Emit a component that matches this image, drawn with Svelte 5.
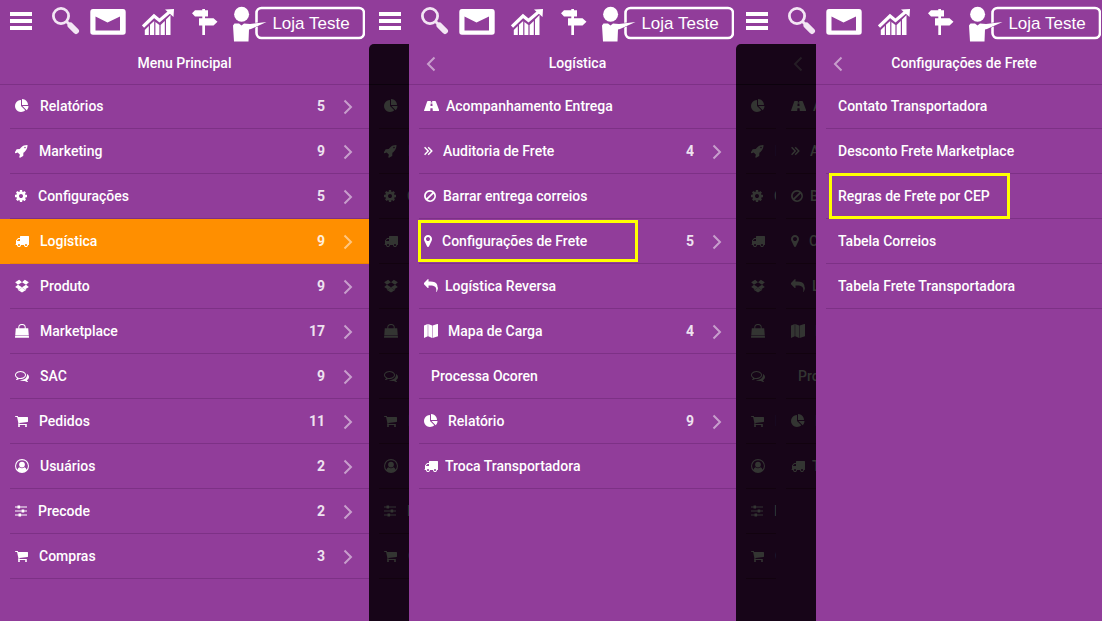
<script lang="ts">
  type Item = {
    label: string
    icon?: string
    count?: number
    active?: boolean
    tight?: boolean
    mark?: 'wide' | 'tall'
  }

  // each icon: left edge and width inside the 1792 grid, drawn width in px, path
  const icons: Record<string, { x: number; w: number; px: number; d: string }> = {
    pie: { x: 0, w: 1792, px: 14, d: 'M768 890l546 546q-106 108-247.5 168t-298.5 60q-209 0-385.5-103t-279.5-279.5-103-385.5 103-385.5 279.5-279.5 385.5-103v762zm187 6h773q0 157-60 298.5t-168 247.5zm709-128h-768v-768q209 0 385.5 103t279.5 279.5 103 385.5z' },
    rocket: { x: 64, w: 1664, px: 13, d: 'M1440 448q0-40-28-68t-68-28-68 28-28 68 28 68 68 28 68-28 28-68zm224-288q0 249-75.5 430.5t-253.5 360.5q-81 80-195 176l-20 379q-2 16-16 26l-384 224q-7 4-16 4-12 0-23-9l-64-64q-13-14-8-32l85-276-281-281-276 85q-3 1-9 1-14 0-23-9l-64-64q-17-19-5-39l224-384q10-14 26-16l379-20q96-114 176-195 188-187 358-258t431-71q14 0 24 9.5t10 22.5z' },
    cog: { x: 128, w: 1536, px: 12, d: 'M1152 896q0-106-75-181t-181-75-181 75-75 181 75 181 181 75 181-75 75-181zm512-109v222q0 12-8 23t-20 13l-185 28q-19 54-39 91 35 50 107 138 10 12 10 25t-9 23q-27 37-99 108t-94 71q-12 0-26-9l-138-108q-44 23-91 38-16 136-29 186-7 28-36 28h-222q-14 0-24.5-8.5t-11.5-21.5l-28-184q-49-16-90-37l-141 107q-10 9-25 9-14 0-25-11-126-114-165-168-7-10-7-23 0-12 8-23 15-21 51-66.5t54-70.5q-27-50-41-99l-183-27q-13-2-21-12.5t-8-23.5v-222q0-12 8-23t19-13l186-28q14-46 39-92-40-57-107-138-10-12-10-24 0-10 9-23 26-36 98.5-107.5t94.5-71.5q13 0 26 10l138 107q44-23 91-38 16-136 29-186 7-28 36-28h222q14 0 24.5 8.5t11.5 21.5l28 184q49 16 90 37l142-107q9-9 24-9 13 0 25 10 129 119 165 170 7 8 7 22 0 12-8 23-15 21-51 66.5t-54 70.5q26 50 41 98l183 28q13 2 21 12.5t8 23.5z' },
    truck: { x: 0, w: 1792, px: 14, d: 'M640 1408q0-52-38-90t-90-38-90 38-38 90 38 90 90 38 90-38 38-90zm-384-512h384v-256h-158q-13 0-22 9l-195 195q-9 9-9 22v30zm1280 512q0-52-38-90t-90-38-90 38-38 90 38 90 90 38 90-38 38-90zm256-1088v1024q0 15-4 26.5t-13.5 18.5-16.5 11.5-23.5 6-22.5 2-25.5 0-22.5-.5q0 106-75 181t-181 75-181-75-75-181h-384q0 106-75 181t-181 75-181-75-75-181h-64q-3 0-22.5.5t-25.5 0-22.5-2-23.5-6-16.5-11.5-13.5-18.5-4-26.5q0-26 19-45t45-19v-320q0-8-.5-35t0-38 2.5-34.5 6.5-37 14-30.5 22.5-30l198-198q19-19 50.5-32t58.5-13h160v-192q0-26 19-45t45-19h1024q26 0 45 19t19 45z' },
    dropbox: { x: 0, w: 1792, px: 14, d: 'M530 100L20 430l360 290 516-320zM1262 100L1772 430l-360 290-516-320zM20 1010l510 330 366-300-516-320zM1772 1010l-510 330-366-300 516-320zM896 1090l-366 300-158-103v115l524 315 524-315v-115l-158 103z' },
    bag: { x: 0, w: 1792, px: 14, d: 'M100 540h320v-130q0-180 140-300t336-120 336 120 140 300v130h320l70 900H30zM550 540h692v-120q0-130-100-215t-246-85-246 85-100 215zM22 1500h1748l22 200q0 70-60 70H60q-60 0-60-70z' },
    comments: { x: 0, w: 1792, px: 14, d: 'M704 384q-153 0-286 52t-211.5 141-78.5 191q0 82 53 158t149 132l97 56-35 84q34-20 62-39l44-31 53 10q78 14 153 14 153 0 286-52t211.5-141 78.5-191-78.5-191-211.5-141-286-52zm0-128q191 0 353.5 68.5t256.5 186.5 94 257-94 257-256.5 186.5-353.5 68.5q-86 0-176-16-124 88-278 128-36 9-86 16h-3q-11 0-20.5-8t-11.5-21q-1-3-1-6.5t.5-6.5 2-6l2.5-5 3.5-5.5 4-5 4.5-5 4-4.5q5-6 23-25t26-29.5 22.5-29 25-38.5 20.5-44q-124-72-195-177t-71-224q0-139 94-257t256.5-186.5 353.5-68.5zm822 1169q10 24 20.5 44t25 38.5 22.5 29 26 29.5 23 25q1 1 4 4.5t4.5 5 4 5 3.5 5.5l2.5 5 2 6 .5 6.5-1 6.5q-3 14-13 22t-22 7q-50-7-86-16-154-40-278-128-90 16-176 16-271 0-472-132 58 4 88 4 161 0 309-45t264-129q125-92 192-212t67-254q0-77-23-152 129 71 204 178t75 230q0 120-71 224.5t-195 176.5z' },
    cart: { x: 64, w: 1664, px: 13, d: 'M704 1536q0 52-38 90t-90 38-90-38-38-90 38-90 90-38 90 38 38 90zm896 0q0 52-38 90t-90 38-90-38-38-90 38-90 90-38 90 38 38 90zm128-1088v512q0 24-16.5 42.5t-40.5 21.5l-1044 122q13 60 13 70 0 16-24 64h920q26 0 45 19t19 45-19 45-45 19h-1024q-26 0-45-19t-19-45q0-11 8-31.5t16-36 21.5-40 15.5-29.5l-177-823h-204q-26 0-45-19t-19-45 19-45 45-19h256q16 0 28.5 6.5t19.5 15.5 13 24.5 8 26 5.5 29.5 4.5 26h1201q26 0 45 19t19 45z' },
    user: { x: 0, w: 1792, px: 14, d: 'M896 0a896 896 0 1 0 0 1792a896 896 0 1 0 0-1792zM896 150a746 746 0 0 1 580 1215q-70-280-270-300-130 115-310 115t-310-115q-200 20-270 300a746 746 0 0 1 580-1215zM896 340a370 370 0 1 1 0 740a370 370 0 1 1 0-740z' },
    sliders: { x: 128, w: 1536, px: 12, d: 'M128 310h320v-120h330v120h886v150H778v120H448V460H128zM128 820h850v-120h330v120h356v150h-356v120H978V970H128zM128 1330h450v-120h330v120h756v150H908v120H578v-120H128z' },
    road: { x: 0, w: 1920, px: 15, d: 'M480 256h400l-20 200h200l-20-200h400q50 0 75 60l440 1150q20 70-40 70h-790l-30-350H825l-30 350H45q-60 0-40-70L405 316q25-60 75-60zM850 580l-22 330h264l-22-330z' },
    angles: { x: 130, w: 1152, px: 9, d: 'M140 480l130-130 530 546-530 546-130-130 400-416zM600 480l130-130 530 546-530 546-130-130 400-416z' },
    ban: { x: 128, w: 1536, px: 12, d: 'M896 128a768 768 0 1 0 0 1536a768 768 0 1 0 0-1536zM896 350a546 546 0 0 1 298 88L438 1194a546 546 0 0 1 458-844zM1354 598a546 546 0 0 1-756 756z' },
    pin: { x: 384, w: 1024, px: 8, d: 'M1152 640q0-106-75-181t-181-75-181 75-75 181 75 181 181 75 181-75 75-181zm256 0q0 109-33 179l-364 774q-16 33-47.5 52t-67.5 19-67.5-19-46.5-52l-365-774q-33-70-33-179 0-212 150-362t362-150 362 150 150 362z' },
    reply: { x: 0, w: 1792, px: 14, d: 'M1792 1120q0 166-127 451-3 7-10.5 24t-13.5 30-13 22q-12 17-28 17-15 0-23.5-10t-8.5-25q0-9 2.5-26.5t2.5-23.5q5-68 5-123 0-112-19.5-200.5t-54-153.5-89-112-116.5-77.5-146.5-46-166.5-21.5-181-6h-224v256q0 26-19 45t-45 19-45-19l-512-512q-19-19-19-45t19-45l512-512q19-19 45-19t45 19 19 45v256h224q713 0 875 403 53 134 53 333z' },
    map: { x: 0, w: 1792, px: 14, d: 'M0 190L480 0v1580L0 1792zM540 0l500 190v1600L540 1580zM1100 190L1700 0q92-20 92 60v1500l-692 232z' },
  }

  const mainMenu: Item[] = [
    { label: 'Relatórios', icon: 'pie', count: 5 },
    { label: 'Marketing', icon: 'rocket', count: 9 },
    { label: 'Configurações', icon: 'cog', count: 5 },
    { label: 'Logística', icon: 'truck', count: 9, active: true },
    { label: 'Produto', icon: 'dropbox', count: 9 },
    { label: 'Marketplace', icon: 'bag', count: 17 },
    { label: 'SAC', icon: 'comments', count: 9 },
    { label: 'Pedidos', icon: 'cart', count: 11 },
    { label: 'Usuários', icon: 'user', count: 2 },
    { label: 'Precode', icon: 'sliders', count: 2 },
    { label: 'Compras', icon: 'cart', count: 3 },
  ]

  const logistics: Item[] = [
    { label: 'Acompanhamento Entrega', icon: 'road', tight: true },
    { label: 'Auditoria de Frete', icon: 'angles', count: 4 },
    { label: 'Barrar entrega correios', icon: 'ban', tight: true },
    { label: 'Configurações de Frete', icon: 'pin', count: 5, mark: 'wide' },
    { label: 'Logística Reversa', icon: 'reply', tight: true },
    { label: 'Mapa de Carga', icon: 'map', count: 4 },
    { label: 'Processa Ocoren', tight: true },
    { label: 'Relatório', icon: 'pie', count: 9 },
    { label: 'Troca Transportadora', icon: 'truck', tight: true },
  ]

  const freight: Item[] = [
    { label: 'Contato Transportadora', tight: true },
    { label: 'Desconto Frete Marketplace', tight: true },
    { label: 'Regras de Frete por CEP', tight: true, mark: 'tall' },
    { label: 'Tabela Correios', tight: true },
    { label: 'Tabela Frete Transportadora', tight: true },
  ]

  const main = { title: 'Menu Principal', items: mainMenu }
  const logi = { title: 'Logística', items: logistics }
  const frete = { title: 'Configurações de Frete', items: freight }

  const screens = [
    { behind: [], panel: main },
    { behind: [main], panel: logi },
    { behind: [main, logi], panel: frete },
  ]
</script>

{#snippet glyph(name: string)}
  {@const i = icons[name]}
  <svg class="glyph" width={i.px} height="14" viewBox="{i.x} 0 {i.w} 1792" aria-hidden="true">
    <path d={i.d} fill="currentColor" fill-rule="evenodd" />
  </svg>
{/snippet}

{#snippet toolbar()}
  <header class="toolbar">
    <button aria-label="Menu">
      <svg width="32" height="36" viewBox="10 6 32 36">
        <path d="M10 12h22v4H10zM10 19h22v4H10zM10 26h22v4H10z" fill="#fff" />
      </svg>
    </button>
    <button aria-label="Buscar">
      <svg width="28" height="36" viewBox="52 6 28 36">
        <circle cx="61" cy="16" r="7.600" fill="none" stroke="#f3e6f4" stroke-width="2.800" />
        <path d="M66.500 21.500l4 4" stroke="#f3e6f4" stroke-width="3" />
        <path d="M70.500 25.500l5.500 5.500" stroke="#f3e6f4" stroke-width="6" stroke-linecap="round" />
      </svg>
    </button>
    <button aria-label="Mensagens">
      <svg width="42" height="36" viewBox="90 6 42 36">
        <path d="M93 9h30q2.700 0 2.700 3v20q0 2.700-2.700 2.700H93q-2.700 0-2.700-2.700V12q0-3 2.700-3zM95.500 16.500V30.500h24.500v-14l-12.500 6z" fill="#fff" fill-rule="evenodd" />
      </svg>
    </button>
    <button aria-label="Estatísticas">
      <svg width="40" height="36" viewBox="142 6 40 36">
        <path d="M144.800 30l4-4v9h-4zM150 24.800l4.200-3.800v14H150zM155.400 22l4 3v10h-4zM160.600 25l4.200-4v14h-4.200zM166 19.500l4.500-4.500v20H166z" fill="#fff" />
        <path d="M143 26.500L154 16l5.500 4.500L170 11.500" fill="none" stroke="#fff" stroke-width="3.200" />
        <path d="M165 9.500l9-.5-.5 8z" fill="#fff" />
      </svg>
    </button>
    <button aria-label="Rotas">
      <svg width="31" height="36" viewBox="192 6 31 36">
        <path d="M202.300 9h2.700v26h-2.700zM192 13.300l3-3h13v6.200h-13zM199 18.200h14.500l4 3.600-4 3.700H199z" fill="#fff" />
      </svg>
    </button>
    <button class="store">
      <svg width="132" height="36" viewBox="233 6 132 36" aria-hidden="true">
        <rect x="256.500" y="8" width="107.500" height="30" rx="5" fill="none" stroke="#fff" stroke-width="2.600" />
        <circle cx="241.600" cy="14.300" r="7.500" fill="#fff" />
        <path d="M234.500 23.500h4.500l2.500 2 2.500-2 6 .5 16.500-2-15.500 7-2 .5-.5 12h-14.500l-1-16z" fill="#fff" stroke="#913d9a" stroke-width="1" paint-order="stroke" />
      </svg>
      <span>Loja Teste</span>
    </button>
  </header>
{/snippet}

{#snippet menu(title: string, items: Item[], sub: boolean)}
  <div class="title" class:sub>
    {#if sub}
      <button class="back" aria-label="Voltar">
        <svg width="10" height="16" viewBox="0 0 10 16" aria-hidden="true">
          <path d="M8.500 1.500L2 8l6.500 6.500" fill="none" stroke="currentColor" stroke-width="2" />
        </svg>
      </button>
    {/if}
    <h2>{title}</h2>
  </div>
  <ul class:sub>
    {#each items as item}
      <li class:active={item.active}>
        <a href="#menu">
          {#if item.icon}{@render glyph(item.icon)}{/if}
          <span class="label" class:tight={item.tight}>{item.label}</span>
          {#if item.count}
            <span class="count">{item.count}</span>
            <svg class="next" width="10" height="16" viewBox="0 0 10 16" aria-hidden="true">
              <path d="M1.500 1.500L8 8l-6.500 6.500" fill="none" stroke="currentColor" stroke-width="2" />
            </svg>
          {/if}
        </a>
        {#if item.mark}<span class="mark {item.mark}"></span>{/if}
      </li>
    {/each}
  </ul>
{/snippet}

<main>
  {#each screens as screen, n}
    <section class="screen">
      {@render toolbar()}
      <div class="body">
        {#if screen.behind.length}
          <div class="shade" aria-hidden="true" inert>
            {#each screen.behind as m, k}
              <div class="strip">{@render menu(m.title, m.items, k > 0)}</div>
            {/each}
          </div>
        {/if}
        <nav class="panel" aria-label={screen.panel.title}>
          {@render menu(screen.panel.title, screen.panel.items, n > 0)}
        </nav>
      </div>
    </section>
  {/each}
</main>

<style>
  :global(body) {
    margin: 0;
    background: #913d9a;
  }
  main {
    display: grid;
    grid-template-columns: 369fr 367fr 366fr;
    min-height: 100vh;
    background: #913d9a;
    color: #fff;
    font: 500 14px/20px Roboto, sans-serif;
  }
  button {
    display: flex;
    padding: 0;
    border: 0;
    background: none;
    color: inherit;
    font: inherit;
  }
  .screen {
    display: flex;
    flex-direction: column;
    min-width: 0;
  }
  .toolbar {
    display: flex;
    gap: 10px;
    height: 38px;
    padding: 6px 0 0 10px;
  }
  .toolbar svg {
    display: block;
  }
  .store {
    position: relative;
  }
  .store span {
    position: absolute;
    inset: 0 0 0 24px;
    font: 17px/35px "Liberation Sans", Arial, sans-serif;
    text-align: center;
  }
  .body {
    display: flex;
    flex: 1;
  }
  .panel {
    flex: 1;
    min-width: 0;
  }
  .shade {
    display: flex;
    border-top-left-radius: 5px;
    background: #170518;
    color: #333532;
    overflow: hidden;
  }
  .strip {
    width: 40px;
    overflow: hidden;
  }
  .title {
    position: relative;
    box-sizing: border-box;
    height: 41px;
    padding: 9px 0;
    border-bottom: 1px solid #7d3186;
  }
  .title.sub {
    padding-left: 10px;
  }
  h2 {
    margin: 0;
    font: inherit;
    text-align: center;
    white-space: nowrap;
  }
  .back {
    position: absolute;
    top: 12px;
    left: 17px;
    opacity: 0.5;
  }
  ul {
    margin: -1px 0 0;
    padding: 0;
    list-style: none;
  }
  li {
    position: relative;
  }
  li::after {
    content: "";
    position: absolute;
    inset: auto 0 0 10px;
    height: 1px;
    background: #7d3186;
  }
  li.active {
    background: #ff8f00;
  }
  li.active::after {
    background: #ee8500;
  }
  a {
    display: flex;
    align-items: center;
    height: 44px;
    padding: 0 16px 1px 15px;
    color: inherit;
    text-decoration: none;
  }
  .sub a {
    padding-right: 14px;
  }
  .glyph {
    flex: none;
  }
  .label {
    flex: 1;
    min-width: 0;
    margin-left: 11px;
    overflow: hidden;
    white-space: nowrap;
  }
  .label.tight {
    margin-left: 7px;
  }
  .sub .label:not(.tight) {
    margin-left: 10px;
  }
  .count {
    font-weight: 700;
    opacity: 0.85;
  }
  .next {
    margin: 1px 0 0 18px;
    opacity: 0.5;
  }
  .mark {
    position: absolute;
    z-index: 1;
    box-sizing: border-box;
    border: 3px solid #ffff00;
  }
  .mark.wide {
    inset: 1px auto 2px 9px;
    width: 220px;
  }
  .mark.tall {
    inset: -1px auto 0 13px;
    width: 181px;
  }
  .shade .title {
    border-color: #0c020d;
  }
  .shade li,
  .shade li.active {
    background: none;
  }
  .shade li::after,
  .shade li.active::after {
    background: #12030f;
  }
  .shade a {
    padding-right: 0;
  }
  .shade .mark,
  .shade h2,
  .shade .count,
  .shade .next {
    display: none;
  }
</style>
